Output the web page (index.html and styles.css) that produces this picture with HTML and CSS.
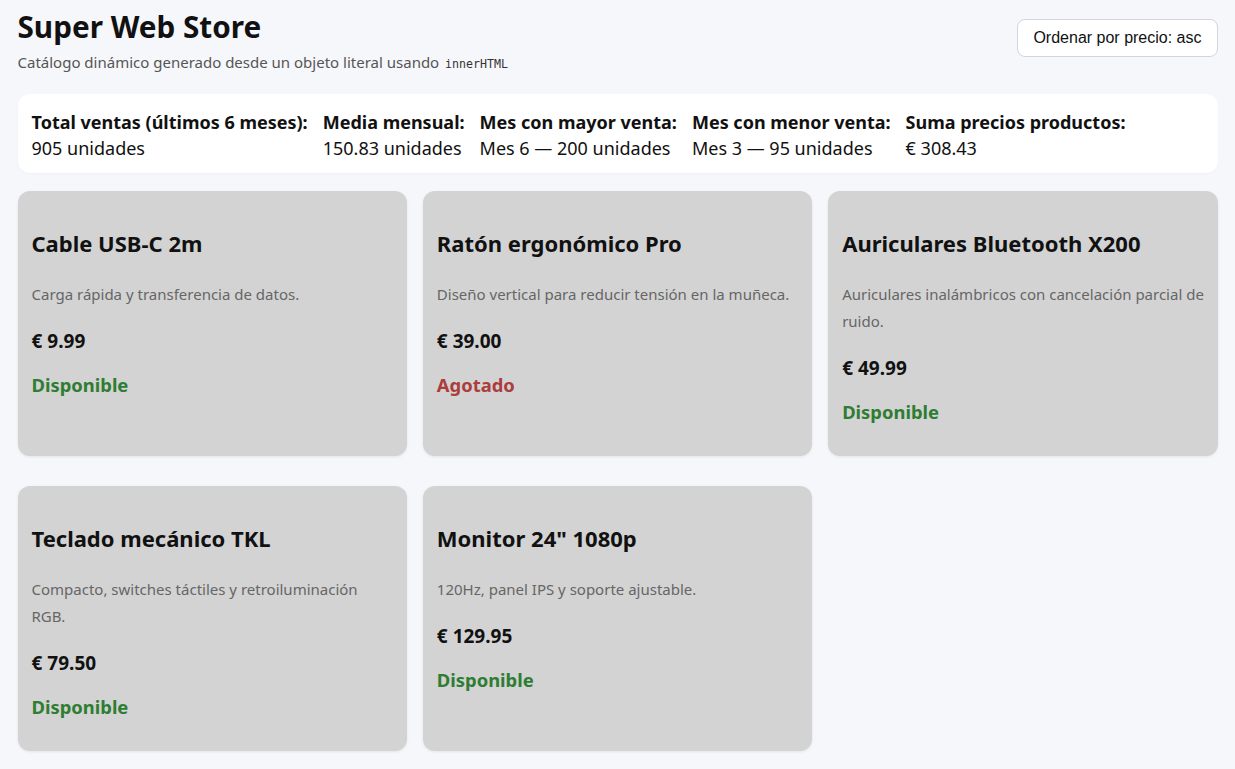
FILE: index.html
```html
<!DOCTYPE html>
<html lang="es">
<head>
<meta charset="utf-8">
<title>Super Web Store</title>
<link rel="stylesheet" href="styles.css">
</head>
<body>
<div class="page">
  <header class="top">
    <div class="brand">
      <h1 class="title">Super Web Store</h1>
      <p class="sub">Catálogo dinámico generado desde un objeto literal usando <code class="code">innerHTML</code></p>
    </div>
    <button class="sort" type="button">Ordenar por precio: asc</button>
  </header>

  <section class="stats">
    <div class="stat"><div class="label">Total ventas (últimos 6 meses):</div><div class="value">905 unidades</div></div>
    <div class="stat"><div class="label">Media mensual:</div><div class="value">150.83 unidades</div></div>
    <div class="stat"><div class="label">Mes con mayor venta:</div><div class="value">Mes 6 — 200 unidades</div></div>
    <div class="stat"><div class="label">Mes con menor venta:</div><div class="value">Mes 3 — 95 unidades</div></div>
    <div class="stat"><div class="label">Suma precios productos:</div><div class="value">€ 308.43</div></div>
  </section>

  <section class="grid">
    <article class="card">
      <h3 class="name">Cable USB-C 2m</h3>
      <p class="desc">Carga rápida y transferencia de datos.</p>
      <p class="price">€ 9.99</p>
      <p class="status ok">Disponible</p>
    </article>
    <article class="card">
      <h3 class="name">Ratón ergonómico Pro</h3>
      <p class="desc">Diseño vertical para reducir tensión en la muñeca.</p>
      <p class="price">€ 39.00</p>
      <p class="status out">Agotado</p>
    </article>
    <article class="card">
      <h3 class="name">Auriculares Bluetooth X200</h3>
      <p class="desc">Auriculares inalámbricos con cancelación parcial de ruido.</p>
      <p class="price">€ 49.99</p>
      <p class="status ok">Disponible</p>
    </article>
    <article class="card">
      <h3 class="name">Teclado mecánico TKL</h3>
      <p class="desc">Compacto, switches táctiles y retroiluminación RGB.</p>
      <p class="price">€ 79.50</p>
      <p class="status ok">Disponible</p>
    </article>
    <article class="card">
      <h3 class="name">Monitor 24" 1080p</h3>
      <p class="desc">120Hz, panel IPS y soporte ajustable.</p>
      <p class="price">€ 129.95</p>
      <p class="status ok">Disponible</p>
    </article>
  </section>
</div>
</body>
</html>
```

FILE: styles.css
```css
* { box-sizing: border-box; }

html, body {
  margin: 0;
  padding: 0;
  background: #f6f7fb;
}

body {
  font-family: "Noto Sans", "Open Sans", sans-serif;
  color: #111;
}

.page {
  max-width: 1200px;
  margin: 0 auto;
  padding-top: 10px;
  padding-bottom: 20px;
}

.top {
  display: flex;
  justify-content: space-between;
  align-items: flex-start;
}

.title {
  margin: 0;
  font-size: 29.7px;
  line-height: 34px;
  font-weight: 700;
  color: #111;
}

.sub {
  margin: 8px 0 0;
  font-size: 15px;
  line-height: 20px;
  height: 20px;
  color: #555;
}

.code {
  font-family: "DejaVu Sans Mono", "Liberation Mono", monospace;
  font-size: 11.6px;
  line-height: 1;
  margin-left: 2px;
  color: #333;
}

.sort {
  margin-top: 9px;
  font-family: "Liberation Sans", Arial, sans-serif;
  font-size: 16px;
  color: #111;
  background: #fff;
  border: 1px solid #d4d4e4;
  border-radius: 8px;
  padding: 0 15px;
  height: 38px;
}

.stats {
  margin-top: 22px;
  background: #fff;
  border-radius: 12px;
  padding: 16px 14px 12px;
  display: flex;
  gap: 15px;
  box-shadow: 0 1px 2px rgba(0, 0, 0, 0.03);
}

.stat .label {
  font-size: 18px;
  line-height: 25.5px;
  font-weight: 700;
}

.stat .value {
  font-size: 18px;
  line-height: 25.5px;
}

.grid {
  margin-top: 18px;
  display: grid;
  grid-template-columns: repeat(3, 1fr);
  gap: 30px 16px;
}

.card {
  background: #d3d3d3;
  border-radius: 12px;
  padding: 14px 12px 14px 14px;
  box-shadow: 0 1px 3px rgba(0, 0, 0, 0.08);
}

.name {
  margin: 24px 0 24px;
  font-size: 22px;
  line-height: 28px;
  font-weight: 700;
}

.desc {
  margin: 0;
  font-size: 15px;
  line-height: 27px;
  color: #666;
}

.price {
  margin: 20px 0 0;
  font-size: 19px;
  line-height: 27px;
  font-weight: 700;
}

.status {
  margin: 16px 0 17px;
  font-size: 18.4px;
  line-height: 27px;
  font-weight: 700;
}

.status.ok { color: #2e7d32; }
.status.out { color: #ab3d3d; }
```
